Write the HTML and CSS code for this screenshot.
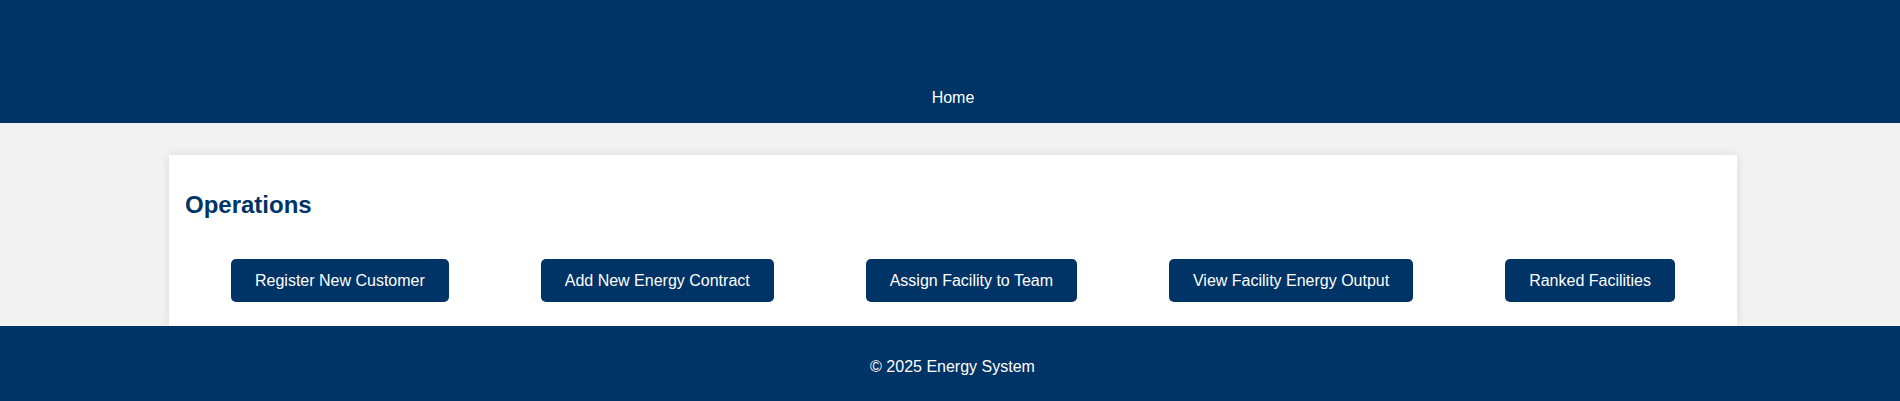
FILE: index.html
```html
<!DOCTYPE html>
<html lang="en">
<head>
<meta charset="utf-8">
<title>Energy System</title>
<link rel="stylesheet" href="styles.css">
</head>
<body>
<header class="site-header">
  <nav class="nav">
    <a class="nav-link" href="#">Home</a>
  </nav>
</header>
<main class="main">
  <section class="card">
    <h2 class="card-title">Operations</h2>
    <div class="actions">
      <a class="btn" href="#">Register New Customer</a>
      <a class="btn" href="#">Add New Energy Contract</a>
      <a class="btn" href="#">Assign Facility to Team</a>
      <a class="btn" href="#">View Facility Energy Output</a>
      <a class="btn" href="#">Ranked Facilities</a>
    </div>
  </section>
</main>
<footer class="site-footer">
  <p class="footer-text">&copy; 2025 Energy System</p>
</footer>
</body>
</html>
```

FILE: styles.css
```css
html, body {
  margin: 0;
  padding: 0;
}
body {
  background: #f2f2f2;
  font-family: "Liberation Sans", Arial, sans-serif;
  font-size: 16px;
  color: #333;
  overflow: hidden;
}
.site-header {
  background: #003366;
  padding: 88.5px 0 15.8px;
}
.nav {
  display: flex;
  justify-content: center;
}
.nav-link {
  color: #ffffff;
  text-decoration: none;
  line-height: 18.4px;
  transform: translateX(3px);
}
.main {
  padding: 32px 163px 0 169px;
}
.card {
  background: #ffffff;
  padding: 16px 16px 0;
  box-shadow: 0 0 10px rgba(0, 0, 0, 0.1);
}
.card-title {
  margin: 20.5px 0 0;
  font-size: 24px;
  line-height: 27px;
  font-weight: bold;
  color: #003366;
}
.actions {
  display: flex;
  justify-content: space-around;
  align-items: center;
  padding: 40.4px 0 24.7px;
}
.btn {
  display: block;
  background: #003366;
  color: #ffffff;
  text-decoration: none;
  padding: 12px 24px;
  line-height: 19px;
  border-radius: 5px;
}
.site-footer {
  background: #003366;
  padding: 31.5px 0 33px 5px;
  text-align: center;
}
.footer-text {
  margin: 0;
  color: #ffffff;
  line-height: 18.4px;
}
```
